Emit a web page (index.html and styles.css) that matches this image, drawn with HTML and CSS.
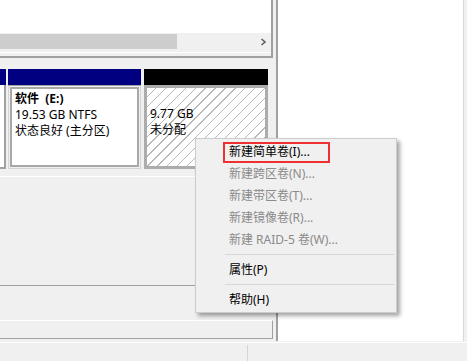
FILE: index.html
```html
<!DOCTYPE html>
<html>

<head>
  <title>磁盘管理</title>
  <link rel="stylesheet" href="styles.css">
</head>

<body>
  <div class="window">
    <div class="main">
      <div class="left">
        <div class="volumes">
          <div class="vol-list"></div>
          <div class="hscroll">
            <div class="thumb"></div>
            <svg class="arrow" width="7" height="8" viewBox="0 0 7 8">
              <polyline points="1.5,1 5,4 1.5,7" fill="none" stroke="#606060" stroke-width="1.6" />
            </svg>
          </div>
          <div class="vol-foot"></div>
        </div>
        <div class="disks">
          <div class="disk-row">
            <div class="part part-edge">
              <div class="part-head blue"></div>
              <div class="part-body"></div>
            </div>
            <div class="part part-e">
              <div class="part-head blue"></div>
              <div class="part-body">
                <div class="inner">
                  <div class="line bold">软件 &nbsp;(E:)</div>
                  <div class="line">19.53 GB NTFS</div>
                  <div class="line">状态良好 (主分区)</div>
                </div>
              </div>
            </div>
            <div class="part part-free">
              <div class="part-head black"></div>
              <div class="part-body hatch">
                <div class="line">&nbsp;</div>
                <div class="line">9.77 GB</div>
                <div class="line">未分配</div>
              </div>
            </div>
          </div>
          <div class="row-gap"></div>
          <div class="row-empty"></div>
          <div class="row-cd"></div>
          <div class="legend"></div>
        </div>
      </div>
      <div class="actions"></div>
    </div>
    <div class="status">
      <div class="status-cell first"></div>
      <div class="status-cell"></div>
    </div>

    <!-- context menu on the unallocated space -->
    <div class="menu">
      <div class="item">新建简单卷(I)...</div>
      <div class="item disabled">新建跨区卷(N)...</div>
      <div class="item disabled">新建带区卷(T)...</div>
      <div class="item disabled">新建镜像卷(R)...</div>
      <div class="item disabled">新建 RAID-5 卷(W)...</div>
      <div class="sep"></div>
      <div class="item">属性(P)</div>
      <div class="sep"></div>
      <div class="item">帮助(H)</div>
      <div class="mark"></div>
    </div>
  </div>
</body>

</html>
```

FILE: styles.css
```css
body {
  margin: 0;
  background: #f0f0f0;
  font-family: "Noto Sans", "Noto Sans CJK SC", sans-serif;
  font-size: 12px;
  color: #000;
}

.window {
  position: relative;
  width: 467px;
  height: 361px;
  overflow: hidden;
}

.main {
  display: flex;
  height: 342px;
}

.left {
  width: 273px;
  display: flex;
  flex-direction: column;
}

/* top pane with the volume list */
.volumes {
  width: 271px;
  border-right: 2px solid #a0a0a0;
  border-bottom: 2px solid #a0a0a0;
}

.vol-list {
  height: 33px;
  background: #fff;
}

.hscroll {
  height: 19px;
  display: flex;
  align-items: flex-start;
  justify-content: space-between;
  background: #f0f0f0;
}

.thumb {
  margin-top: 1px;
  width: 177px;
  height: 15px;
  background: #cdcdcd;
}

.arrow {
  margin-top: 5px;
  margin-right: 4px;
}

.vol-foot {
  height: 3px;
  border-top: 1px solid #fff;
}

/* graphical disk view */
.disks {
  flex: 1;
  display: flex;
  flex-direction: column;
  padding-top: 11px;
}

.disk-row {
  display: flex;
  height: 100px;
}

.part {
  display: flex;
  flex-direction: column;
}

.part-edge {
  width: 6px;
}

.part-e {
  width: 133px;
  margin-left: 2px;
}

.part-free {
  width: 124px;
  margin-left: 3px;
}

.part-head {
  height: 16px;
}

.blue {
  background: #000080;
}

.black {
  background: #000;
}

.part-body {
  flex: 1;
  border: 1px solid #d4d4d4;
  border-top-color: #a0a0a0;
  padding: 1px;
  display: flex;
}

.part-edge .part-body {
  background: #fff;
  border: none;
  border-right: 2px solid #a0a0a0;
  border-bottom: 2px solid #a0a0a0;
}

.inner {
  flex: 1;
  background: #fff;
  border: 2px solid #a8a8a8;
  padding: 2px 3px;
}

.line {
  line-height: 16px;
  white-space: nowrap;
}

.bold {
  font-weight: bold;
}

.hatch {
  flex-direction: column;
  border: 3px solid #acacac;
  padding: 2px 3px;
  background: repeating-linear-gradient(135deg, #fff 0 6px, #b8b8b8 6px 7px);
}

.row-gap {
  height: 7px;
}

.row-empty {
  height: 108px;
  border-top: 1px solid #fff;
}

.row-cd {
  height: 34px;
  border-top: 1px solid #a0a0a0;
}

.legend {
  height: 17px;
  border-top: 1px solid #fff;
  border-bottom: 1px solid #a0a0a0;
  border-right: 1px solid #a0a0a0;
}

/* actions pane */
.actions {
  flex: 1;
  margin-left: 3px;
  margin-right: 3px;
  margin-bottom: 1px;
  background: #fff;
  border-left: 2px solid #a0a0a0;
  border-right: 1px solid #d9d9d9;
}

.status {
  display: flex;
  height: 18px;
  border-top: 1px solid #fff;
}

.status-cell.first {
  width: 247px;
  margin-top: 2px;
  border-right: 1px solid #d4d4d4;
}

/* context menu */
.menu {
  position: absolute;
  left: 195px;
  top: 138px;
  width: 200px;
  padding: 2px 0 1px 0;
  background: #f0f0f0;
  border: 1px solid #cccccc;
  box-shadow: 3px 3px 4px rgba(0, 0, 0, 0.35);
}

.item {
  height: 22px;
  line-height: 22px;
  padding-left: 33px;
  white-space: nowrap;
}

.item.disabled {
  color: #8a8a8a;
}

.sep {
  height: 1px;
  margin: 3px 2px 4px 29px;
  background: #d7d7d7;
}

.mark {
  position: absolute;
  left: 27px;
  top: 3px;
  width: 103px;
  height: 17px;
  border: 2px solid #ee3035;
}
```
